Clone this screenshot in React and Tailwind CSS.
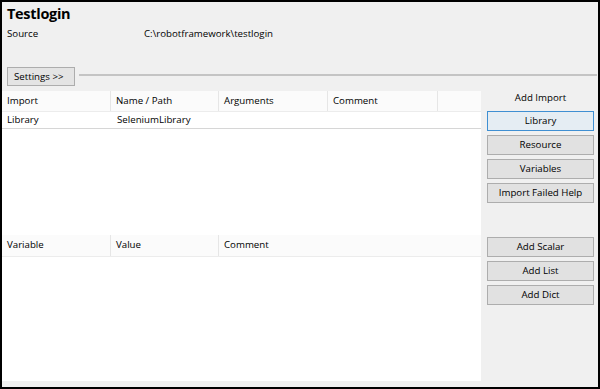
const importCols = [
  { label: 'Import', w: 'w-[109px]' },
  { label: 'Name / Path', w: 'w-[108px]' },
  { label: 'Arguments', w: 'w-[109px]' },
  { label: 'Comment', w: 'w-[110px]' },
  { label: '', w: 'flex-1' },
];

const varCols = [
  { label: 'Variable', w: 'w-[109px]' },
  { label: 'Value', w: 'w-[108px]' },
  { label: 'Comment', w: 'flex-1' },
];

function Btn({ children, active }) {
  return (
    <div
      className={
        'h-[20px] leading-[18px] text-center border ' +
        (active ? 'border-[#3f8fd2] bg-[#e5edf3]' : 'border-[#adadad] bg-[#e1e1e1]')
      }
    >
      {children}
    </div>
  );
}

function Header({ cols, h }) {
  return (
    <div className={'flex bg-[#fbfbfb] border-b border-[#ececec] ' + h}>
      {cols.map((c, i) => (
        <div
          key={i}
          className={
            'flex items-center pl-[5px] ' +
            c.w +
            (i < cols.length - 1 ? ' border-r border-[#e6e6e6]' : '')
          }
        >
          {c.label}
        </div>
      ))}
    </div>
  );
}

export default function App() {
  return (
    <div className="w-[600px] h-[389px] border-2 border-black bg-[#f0f0f0] flex flex-col text-[9.7px] text-black font-['Open_Sans',sans-serif] overflow-hidden">
      {/* Title and source */}
      <div className="pl-[5px] pt-[2px]">
        <h1 className="text-[14.5px] font-bold leading-[19px] tracking-[-0.3px]">Testlogin</h1>
        <div className="flex leading-[12px] mt-[5px]">
          <span className="w-[137px]">Source</span>
          <span>C:\robotframework\testlogin</span>
        </div>
      </div>

      {/* Settings toggle */}
      <div className="flex items-start pl-[5px] pr-[1px] mt-[27px]">
        <div className="h-[19px] leading-[17px] px-[6px] w-[68px] border border-[#adadad] bg-[#e4e4e4]">
          Settings &gt;&gt;
        </div>
        <div className="flex-1 ml-[4px] mt-[7px] border-t-2 border-[#c4c4c4]" />
      </div>

      {/* Main area */}
      <div className="flex-1 flex mt-[5px] pb-[6px]">
        <div className="w-[479px] flex flex-col bg-white">
          <div className="h-[144px]">
            <Header cols={importCols} h="h-[21px]" />
            <div className="flex h-[17px] border-b border-[#d6d6d6]">
              <div className="w-[109px] pl-[5px] flex items-center">Library</div>
              <div className="pl-[6px] flex items-center">SeleniumLibrary</div>
            </div>
          </div>
          <div className="flex-1">
            <Header cols={varCols} h="h-[22px]" />
          </div>
        </div>

        <div className="w-[107px] ml-[6px] flex flex-col">
          <div className="h-[144px] flex flex-col gap-[4px]">
            <div className="h-[16px] leading-[14px] text-center">Add Import</div>
            <Btn active>Library</Btn>
            <Btn>Resource</Btn>
            <Btn>Variables</Btn>
            <Btn>Import Failed Help</Btn>
          </div>
          <div className="pt-[2px] flex flex-col gap-[4px]">
            <Btn>Add Scalar</Btn>
            <Btn>Add List</Btn>
            <Btn>Add Dict</Btn>
          </div>
        </div>
      </div>
    </div>
  );
}
